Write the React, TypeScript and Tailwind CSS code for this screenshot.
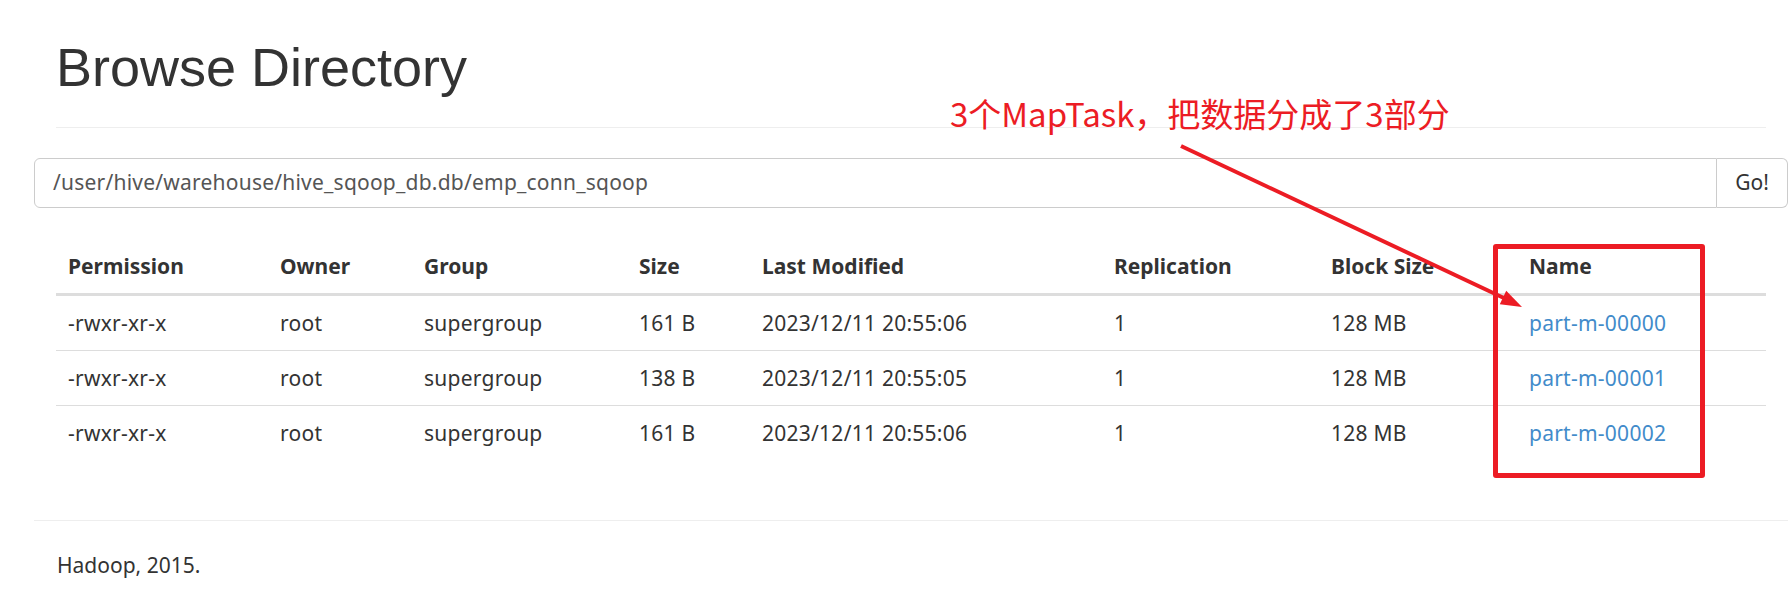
import React from 'react';

const ROWS = [
  { perm: '-rwxr-xr-x', owner: 'root', group: 'supergroup', size: '161 B', modified: '2023/12/11 20:55:06', repl: '1', block: '128 MB', name: 'part-m-00000' },
  { perm: '-rwxr-xr-x', owner: 'root', group: 'supergroup', size: '138 B', modified: '2023/12/11 20:55:05', repl: '1', block: '128 MB', name: 'part-m-00001' },
  { perm: '-rwxr-xr-x', owner: 'root', group: 'supergroup', size: '161 B', modified: '2023/12/11 20:55:06', repl: '1', block: '128 MB', name: 'part-m-00002' },
];

const HEADERS = ['Permission', 'Owner', 'Group', 'Size', 'Last Modified', 'Replication', 'Block Size', 'Name'];

const Annotation: React.FC = () => (
  <>
    <div className="absolute left-[950px] top-[97px] font-['Noto_Sans_CJK_SC',sans-serif] text-[33px] leading-none text-[#ec1c24] whitespace-nowrap">
      3个MapTask，把数据分成了3部分
    </div>
    <svg className="absolute left-0 top-0 pointer-events-none" width="1788" height="595" viewBox="0 0 1788 595">
      <line x1="1181" y1="146" x2="1506" y2="299" stroke="#ec1c24" strokeWidth="4" />
      <polygon points="1522,307 1499.8,304.2 1506.2,290.8" fill="#ec1c24" />
    </svg>
    <div className="absolute left-[1493px] top-[244px] w-[212px] h-[234px] border-[5px] border-[#ec1c24] rounded-[3px]" />
  </>
);

export default function App() {
  return (
    <div className="relative w-[1788px] h-[595px] overflow-hidden bg-white font-['Noto_Sans',sans-serif] text-[21px] text-[#333]">
      <div className="pl-[56px] pr-[22px]">
        <div className="pt-[38px] pb-[30px] border-b border-[#eee]">
          <h1 className="font-['Liberation_Sans',Arial,sans-serif] text-[54px] leading-[59px] font-normal">Browse Directory</h1>
        </div>
      </div>

      <div className="ml-[34px] mt-[30px] flex h-[50px]">
        <div className="flex-1 flex items-center border border-[#ccc] rounded-l-[6px] px-[18px] text-[#555] tracking-[0.22px]">
          /user/hive/warehouse/hive_sqoop_db.db/emp_conn_sqoop
        </div>
        <button className="w-[71px] flex items-center justify-center border border-l-0 border-[#ccc] rounded-r-[6px] bg-white text-[#333]">
          Go!
        </button>
      </div>

      <div className="pl-[56px] pr-[22px] mt-[31px]">
        <table className="w-full table-fixed border-separate border-spacing-0 text-left">
          <colgroup>
            <col className="w-[212px]" />
            <col className="w-[144px]" />
            <col className="w-[215px]" />
            <col className="w-[123px]" />
            <col className="w-[352px]" />
            <col className="w-[217px]" />
            <col className="w-[198px]" />
            <col />
          </colgroup>
          <thead>
            <tr>
              {HEADERS.map(h => (
                <th key={h} className="px-[12px] py-[12px] leading-[30px] font-bold border-b-[3px] border-[#ddd]">{h}</th>
              ))}
            </tr>
          </thead>
          <tbody className="tracking-[0.25px]">
            {ROWS.map((r, i) => {
              const cell = i === 0 ? 'px-[12px] py-[12px] leading-[30px]' : 'px-[12px] py-[12px] leading-[30px] border-t border-[#ddd]';
              return (
                <tr key={r.name}>
                  <td className={cell}>{r.perm}</td>
                  <td className={cell}>{r.owner}</td>
                  <td className={cell}>{r.group}</td>
                  <td className={cell}>{r.size}</td>
                  <td className={cell}>{r.modified}</td>
                  <td className={cell}>{r.repl}</td>
                  <td className={cell}>{r.block}</td>
                  <td className={cell}><a href="#" className="text-[#428bca]">{r.name}</a></td>
                </tr>
              );
            })}
          </tbody>
        </table>
      </div>

      <div className="ml-[34px] mt-[60px] border-t border-[#eee] pt-[29px] pl-[23px] leading-[30px]">
        Hadoop, 2015.
      </div>

      <Annotation />
    </div>
  );
}
